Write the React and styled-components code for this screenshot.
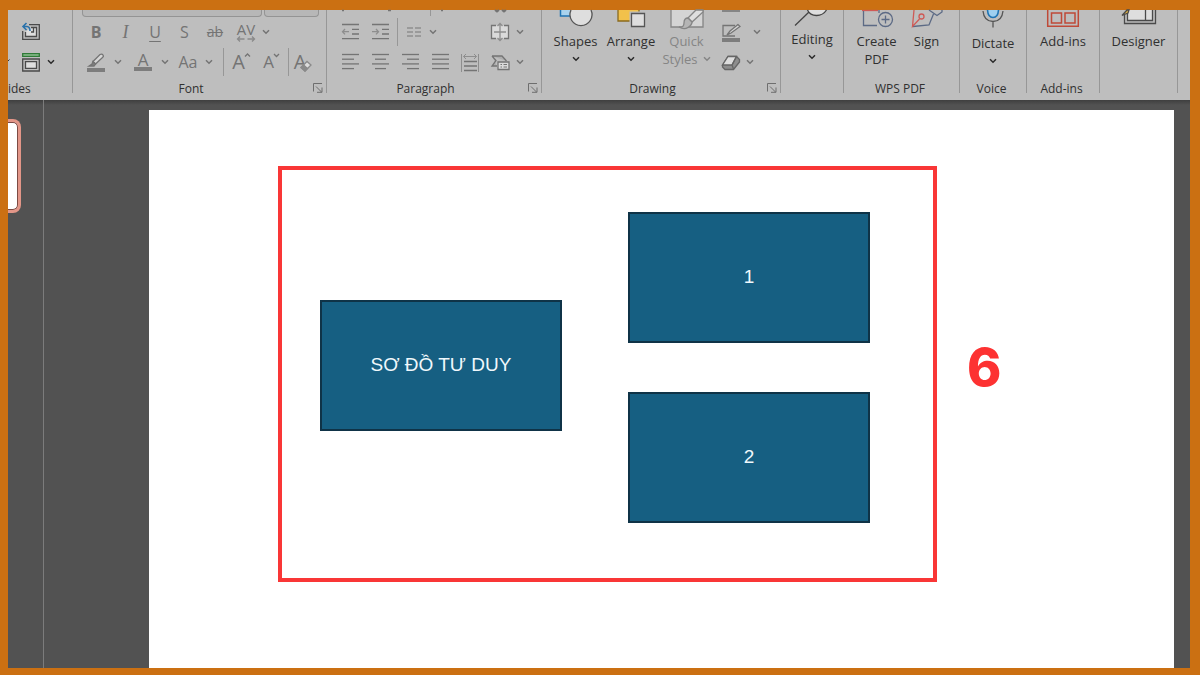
import styled, { createGlobalStyle, css } from "styled-components";

const GlobalStyle = createGlobalStyle`
  * {
    box-sizing: border-box;
  }
  body {
    margin: 0;
    background-color: #cb7012;
    font-family: "Open Sans", "Noto Sans", sans-serif;
  }
  svg {
    display: block;
    flex: none;
    overflow: visible;
  }
`;

//orange frame around the whole window
const Frame = styled.div`
  display: flex;
  flex-direction: column;
  min-height: 100vh;
  padding: 10px 10px 7px 8px;
  background-color: #cb7012;
`;

//ribbon
const Ribbon = styled.header`
  display: grid;
  grid-template-columns: 65fr 254fr 215fr 239fr 63fr 116fr 67fr 73fr 78fr 12fr;
  padding-bottom: 7px;
  background-color: #bebebe;
`;

const Group = styled.section`
  display: flex;
  flex-direction: column;
  min-width: 0;
  border-right: 1px solid #979797;
`;

const GroupBody = styled.div`
  height: 69px;
`;

const LargeRow = styled.div`
  display: flex;
  justify-content: ${(props) => (props.$start ? "flex-start" : "center")};
  height: 69px;
  padding-left: ${(props) => (props.$start ? "6px" : "0")};
`;

const GroupFooter = styled.div`
  display: flex;
  height: 14px;
  padding: 4px 3px 0 0;
`;

const GroupLabel = styled.span`
  flex: 1;
  color: #303030;
  font-size: 12px;
  line-height: 12px;
  text-align: ${(props) => (props.$left ? "left" : "center")};
  white-space: nowrap;
`;

const Row = styled.div`
  display: flex;
  align-items: center;
  height: 30px;
  padding: ${(props) => props.$pad || "0 16px 0 8px"};
`;

//bottom edge of the row that is scrolled under the frame
const TopRow = styled.div`
  display: flex;
  gap: 2px;
  height: 7px;
  padding: 0 7px 0 9px;
`;

const BoxEdge = styled.div`
  flex: ${(props) => props.$grow} 0 0;
  border: 1px solid #949494;
  border-top: 0;
  border-radius: 0 0 4px 4px;
  background-color: #b7b7b7;
`;

const plainButton = css`
  padding: 0;
  border: 0;
  background: none;
  font-family: inherit;
`;

const Tool = styled.button`
  ${plainButton}
  display: flex;
  flex: none;
  align-items: center;
  justify-content: center;
  width: ${(props) => props.$w || 30}px;
  height: 28px;
  color: #747474;
`;

const Letter = styled.span`
  font-size: ${(props) => props.$size || 16}px;
  line-height: 20px;
  font-weight: ${(props) => (props.$bold ? 700 : 400)};
  font-style: ${(props) => (props.$italic ? "italic" : "normal")};
  font-family: ${(props) => (props.$serif ? '"Liberation Serif", serif' : "inherit")};
  text-decoration: ${(props) => props.$line || "none"};
  text-decoration-thickness: 1px;
  text-underline-offset: 3px;
`;

const Stack = styled.span`
  display: flex;
  flex-direction: column;
  align-items: center;
`;

const TightLetter = styled.span`
  font-size: ${(props) => props.$size}px;
  line-height: 14px;
`;

const ColorBar = styled.span`
  width: 18px;
  height: 4px;
  background-color: #7d7d7d;
`;

const SizeLetter = styled.span`
  display: flex;
  align-items: flex-start;
  font-size: ${(props) => props.$size}px;
  line-height: 20px;
`;

const Divider = styled.span`
  flex: none;
  width: 1px;
  height: 28px;
  margin: 0 2px 0 ${(props) => props.$before || 2}px;
  background-color: #979797;
`;

const Spacer = styled.span`
  flex: 1;
`;

const LargeButton = styled.button`
  ${plainButton}
  display: flex;
  flex: none;
  flex-direction: column;
  align-items: center;
  width: ${(props) => props.$w || 50}px;
  color: ${(props) => (props.$muted ? "#858585" : "#303030")};
  font-size: 13px;
  line-height: 18px;
  white-space: nowrap;
`;

const LargeIcon = styled.span`
  display: flex;
  align-items: flex-end;
  height: ${(props) => props.$h || 18}px;
  margin-bottom: 4px;
`;

const ButtonLine = styled.span`
  display: flex;
  align-items: center;
  gap: 5px;
  height: 18px;
`;

const Launcher = styled.button`
  ${plainButton}
  display: flex;
  justify-content: flex-end;
  width: 14px;
  height: 10px;
`;

//work area below the ribbon
const Workspace = styled.main`
  display: flex;
  flex: 1;
  background: linear-gradient(#3f3f3f, #525252 5px);
`;

const Thumbnails = styled.aside`
  width: 36px;
  padding-top: 19px;
  border-right: 1px solid #7c7c7c;
`;

const Thumbnail = styled.button`
  ${plainButton}
  display: block;
  width: 13px;
  height: 94px;
  border: 3px solid #e39688;
  border-left: 0;
  border-radius: 0 8px 8px 0;
  background-color: #ffffff;
  box-shadow: inset -1px 0 0 #7c4b44, inset 0 1px 0 #7c4b44, inset 0 -1px 0 #7c4b44;
`;

const Canvas = styled.div`
  display: flex;
  flex: 1;
  padding: 10px 16px 0 105px;
`;

const Slide = styled.div`
  position: relative;
  flex: 1;
  background-color: #ffffff;
`;

//shapes are placed freely on the slide
const Node = styled.div`
  position: absolute;
  left: ${(props) => props.$x}px;
  top: ${(props) => props.$y}px;
  display: flex;
  align-items: center;
  justify-content: center;
  width: 242px;
  height: 131px;
  padding-bottom: 2px;
  border: 2px solid #0f3347;
  background-color: #165f82;
  color: #f0f8fc;
  font-family: "Liberation Sans", Arial, sans-serif;
  font-size: 19px;
  line-height: 24px;
`;

const Highlight = styled.div`
  position: absolute;
  left: 129px;
  top: 56px;
  width: 659px;
  height: 416px;
  border: 4px solid #f93636;
`;

const StepNumber = styled.span`
  position: absolute;
  left: 818px;
  top: 228px;
  color: #fd3232;
  font-family: Inter, sans-serif;
  font-size: 52px;
  font-weight: 800;
  line-height: 60px;
`;

function Chevron({ color = "#747474" }) {
  return (
    <svg width="8" height="6" viewBox="0 0 8 6" fill="none" stroke={color} strokeWidth="1.5">
      <path d="M1 1.2 4 4.2 7 1.2" />
    </svg>
  );
}

function Drop({ w = 10, label, dark }) {
  return (
    <Tool $w={w} aria-label={label}>
      <Chevron color={dark ? "#2a2a2a" : "#747474"} />
    </Tool>
  );
}

function Icon({ children, w = 20, h = 20, stroke = "#747474" }) {
  return (
    <svg width={w} height={h} viewBox={`0 0 ${w} ${h}`} fill="none" stroke={stroke} strokeWidth="1.3">
      {children}
    </svg>
  );
}

//horizontal text lines used by all the alignment icons, each one is [x1, x2]
function LinesIcon({ lines }) {
  return (
    <Icon>
      {lines.map(([from, to], i) => (
        <path key={i} d={`M${from} ${2.5 + i * 4.7}H${to}`} />
      ))}
    </Icon>
  );
}

function Footer({ children, launcher }) {
  return (
    <GroupFooter>
      <GroupLabel>{children}</GroupLabel>
      {launcher && (
        <Launcher aria-label={`${children} settings`}>
          <svg width="10" height="10" viewBox="0 0 10 10" fill="none" stroke="#6e6e6e">
            <path d="M.5 8.5V.5H9M3 3.5 8.5 9M9 4.5V9.3H4" />
          </svg>
        </Launcher>
      )}
    </GroupFooter>
  );
}

function SlidesGroup() {
  return (
    <Group>
      <GroupBody>
        <TopRow />
        <Row $pad="0 0 0 8px">
          <Tool aria-label="Reset">
            <Icon stroke="#4a4a4a">
              <path d="M8 2.7H18.300V17.300H1.700V9" />
              <path d="M10 5.500H15.500V14.500H4.500V10" fill="#dedede" />
              <path d="M12.500 5.500V10H10" />
              <path d="M5.500 1 2 4.500 5.500 8M2.300 4.500H6Q9 4.700 9 9" stroke="#2a72ab" strokeWidth="1.600" />
            </Icon>
          </Tool>
        </Row>
        <Row $pad="0">
          <Tool $w={8} aria-label="New slide">
            <svg width="8" height="6" viewBox="0 0 8 6" stroke="#333">
              <path d="M0 2 1.5 .5" />
            </svg>
          </Tool>
          <Tool aria-label="Layout">
            <Icon stroke="#4a4a4a">
              <path d="M1.700 1.700H18.300V4.300H1.700Z" stroke="#2f7a37" fill="#8fbf92" />
              <path d="M1.700 7H18.300V19H1.700Z" />
              <path d="M4.500 9.700H15.500V16.300H4.500Z" fill="#dedede" />
            </Icon>
          </Tool>
          <Drop dark label="Layout options" />
        </Row>
      </GroupBody>
      <GroupFooter>
        <GroupLabel $left>ides</GroupLabel>
      </GroupFooter>
    </Group>
  );
}

function FontGroup() {
  return (
    <Group>
      <GroupBody>
        <TopRow>
          <BoxEdge $grow={181} />
          <BoxEdge $grow={54} />
        </TopRow>
        <Row $pad="0 0 0 8px">
          <Tool><Letter $bold>B</Letter></Tool>
          <Tool $w={29}><Letter $italic $serif $size={18}>I</Letter></Tool>
          <Tool><Letter $line="underline">U</Letter></Tool>
          <Tool $w={29}><Letter>S</Letter></Tool>
          <Tool $w={32}><Letter $line="line-through" $size={14}>ab</Letter></Tool>
          <Tool>
            <Stack>
              <TightLetter $size={15}>AV</TightLetter>
              <Icon w={20} h={6} stroke="#8a8a8a">
                <path d="M4 .5 1.5 3 4 5.5M1.5 3H8.5M16 .5 18.5 3 16 5.5M18.5 3H11.5" />
              </Icon>
            </Stack>
          </Tool>
          <Drop label="Character spacing" />
        </Row>
        <Row $pad="0 0 0 8px">
          <Tool aria-label="Highlight">
            <Icon>
              <path d="M1 16H19V20H1Z" fill="#7d7d7d" stroke="none" />
              <path d="M7 9.500 14 2.500Q16 1.500 17 3T16.500 5.500L9.500 12Z" fill="#d6d6d6" />
              <path d="M7 9.500 6 12 3 14H8L9.500 12Z" fill="#7d7d7d" />
            </Icon>
          </Tool>
          <Drop w={14} label="Highlight colour" />
          <Tool $w={36}>
            <Stack>
              <TightLetter $size={17}>A</TightLetter>
              <ColorBar />
            </Stack>
          </Tool>
          <Drop w={8} label="Font colour" />
          <Tool $w={38}><Letter>Aa</Letter></Tool>
          <Drop w={4} label="Change case" />
          <Divider $before={12} />
          <Tool>
            <SizeLetter $size={20}>
              A
              <Icon w={5} h={8}><path d="M0 4.500 2.500 2 5 4.500" /></Icon>
            </SizeLetter>
          </Tool>
          <Tool>
            <SizeLetter $size={17}>
              A
              <Icon w={5} h={8}><path d="M0 2 2.500 4.500 5 2" /></Icon>
            </SizeLetter>
          </Tool>
          <Divider />
          <Tool $w={24}>
            <SizeLetter $size={20}>
              A
              <Icon w={6} h={20} stroke="#8a8a8a">
                <path d="M-5 15.500 1 9.500 5 13 -1 19Z" fill="#dcdcdc" />
                <path d="M-5 15.500 -2.500 13 1.500 16.500 -1 19Z" fill="#8a8a8a" />
              </Icon>
            </SizeLetter>
          </Tool>
        </Row>
      </GroupBody>
      <Footer launcher>Font</Footer>
    </Group>
  );
}

function ParagraphGroup() {
  return (
    <Group>
      <GroupBody>
        <TopRow>
          <Icon w={170} h={7}>
            <path d="M6 .5H8M52 .5H55M105 .5H107" />
            <path d="M94.500 0V6" stroke="#979797" strokeWidth="1" />
            <path d="M159 0 161 1.500 163 0M166 0 168 1.500 170 0" strokeWidth="2" />
          </Icon>
        </TopRow>
        <Row>
          <Tool aria-label="Decrease indent">
            <Icon>
              <path d="M2 2.500H19M12 7.300H19M12 12H19M2 16.700H19" />
              <path d="M5 7 2.500 9.700 5 12.400M2.500 9.700H9" stroke="#8e8e8e" />
            </Icon>
          </Tool>
          <Tool aria-label="Increase indent">
            <Icon>
              <path d="M2 2.500H19M12 7.300H19M12 12H19M2 16.700H19" />
              <path d="M6 7 8.500 9.700 6 12.400M8.500 9.700H2" stroke="#8e8e8e" />
            </Icon>
          </Tool>
          <Divider />
          <Tool aria-label="Columns">
            <Icon stroke="#8e8e8e">
              <path d="M2 6H8M10 6H16M2 10H8M10 10H16M2 14H8M10 14H16" />
            </Icon>
          </Tool>
          <Drop w={6} label="Column options" />
          <Spacer />
          <Tool aria-label="Align text">
            <Icon>
              <path d="M1.500 3.500H18.500V16.500H1.500Z" fill="#dadada" stroke="none" />
              <path d="M6 3.500H1.500V16.500H6M14 3.500H18.500V16.500H14" />
              <path d="M4 10H16M10 2V18M7.500 4 10 1.500 12.500 4M7.500 16 10 18.500 12.500 16" stroke="#8e8e8e" />
            </Icon>
          </Tool>
          <Drop label="Align text options" />
        </Row>
        <Row>
          <Tool aria-label="Align left"><LinesIcon lines={[[2, 19], [2, 14], [2, 19], [2, 14]]} /></Tool>
          <Tool aria-label="Center"><LinesIcon lines={[[2, 19], [5, 16], [2, 19], [5, 16]]} /></Tool>
          <Tool aria-label="Align right"><LinesIcon lines={[[2, 19], [7, 19], [2, 19], [7, 19]]} /></Tool>
          <Tool aria-label="Justify"><LinesIcon lines={[[2, 19], [2, 19], [2, 19], [2, 19]]} /></Tool>
          <Tool aria-label="Distribute">
            <Icon>
              <path d="M4 9.500H17M4 14H17M4 18.500H17" />
              <path d="M1.500 2V20M18.500 2V20M6 2 3.500 4.500 6 7M14 2 16.500 4.500 14 7M3.500 4.500H16.500" stroke="#8e8e8e" strokeWidth="1" />
            </Icon>
          </Tool>
          <Spacer />
          <Tool aria-label="Convert to SmartArt">
            <Icon>
              <path d="M2 4H12L16.500 9M2 4 6 8.500 2 14H7" fill="#adadad" />
              <path d="M8 10H19V17.500H8Z" fill="#dadada" />
              <path d="M10.500 12.500H12M13.500 12.500H17M10.500 15H12M13.500 15H17" strokeWidth="1" />
            </Icon>
          </Tool>
          <Drop label="SmartArt options" />
        </Row>
      </GroupBody>
      <Footer launcher>Paragraph</Footer>
    </Group>
  );
}

function DrawingGroup() {
  return (
    <Group>
      <LargeRow $start>
        <LargeButton $w={55}>
          <LargeIcon>
            <Icon w={34} h={18} stroke="#555">
              <path d="M1.500 0V6H12V0" fill="#a9d3ee" stroke="none" />
              <path d="M1.500 0V6H12" stroke="#1f74b4" strokeWidth="1.500" />
              <path d="M12 0A11 11 0 1 0 32 0Z" fill="#dedede" stroke="none" />
              <path d="M12 0A11 11 0 1 0 32 0" />
            </Icon>
          </LargeIcon>
          <ButtonLine>Shapes</ButtonLine>
          <ButtonLine><Chevron color="#2a2a2a" /></ButtonLine>
        </LargeButton>
        <LargeButton $w={56}>
          <LargeIcon>
            <Icon w={28} h={18} stroke="#555">
              <path d="M1 0V11H22V0" fill="#f2c14b" stroke="#8a6a1c" />
              <path d="M14 3H28V17H14Z" fill="#dedede" stroke="#bebebe" strokeWidth="3" />
              <path d="M14.500 3.500H27.500V16.500H14.500Z" fill="#dedede" />
            </Icon>
          </LargeIcon>
          <ButtonLine>Arrange</ButtonLine>
          <ButtonLine><Chevron color="#2a2a2a" /></ButtonLine>
        </LargeButton>
        <LargeButton $w={55} $muted>
          <LargeIcon>
            <Icon w={34} h={18} stroke="#858585">
              <path d="M1 0V17H33V0" fill="#d4d4d4" />
              <path d="M18 8 26 0H33V2L22 12Z" fill="#dedede" />
              <path d="M18 8Q14 8 14 13T9 17Q14 20 18 17.500T22 12Z" fill="#b5b5b5" />
            </Icon>
          </LargeIcon>
          <ButtonLine>Quick</ButtonLine>
          <ButtonLine>Styles <Chevron color="#858585" /></ButtonLine>
        </LargeButton>
        <GroupBody>
          <TopRow>
            <Icon w={18} h={2}><path d="M-1 1H17" stroke="#858585" strokeWidth="2" /></Icon>
          </TopRow>
          <Row $pad="0 0 0 2px">
            <Tool aria-label="Shape outline">
              <Icon>
                <path d="M1 16H19V20H1Z" fill="#7d7d7d" stroke="none" />
                <path d="M14 3.500H2V14H14" />
                <path d="M17 2.500 9 9 6 13 10 11 19 4.500Z" fill="#d6d6d6" />
              </Icon>
            </Tool>
            <Drop w={22} label="Outline options" />
          </Row>
          <Row $pad="0 0 0 2px">
            <Tool aria-label="Shape effects">
              <Icon stroke="#666">
                <path d="M1.500 13 7 4.500H15.500L18.500 7.500V10L12.500 17.500H4L1.500 15Z" fill="#8e8e8e" />
                <path d="M1.500 13 7 4.500H15.500L11 13Z" fill="#dedede" />
                <path d="M11 13 12.500 17M11 13 15.500 4.500" />
              </Icon>
            </Tool>
            <Drop w={8} label="Effect options" />
          </Row>
        </GroupBody>
      </LargeRow>
      <Footer launcher>Drawing</Footer>
    </Group>
  );
}

function EditingGroup() {
  return (
    <Group>
      <LargeRow>
        <LargeButton>
          <LargeIcon $h={16}>
            <Icon w={34} h={16} stroke="#444">
              <path d="M12.500 0Q15 5.500 21.500 5.500T31.500 0Z" fill="#dedede" stroke="none" />
              <path d="M12.500 0Q15 5.500 21.500 5.500T31.500 0" />
              <path d="M14 2 0 15.500" />
            </Icon>
          </LargeIcon>
          <ButtonLine>Editing</ButtonLine>
          <ButtonLine><Chevron color="#2a2a2a" /></ButtonLine>
        </LargeButton>
      </LargeRow>
    </Group>
  );
}

function PdfGroup() {
  return (
    <Group>
      <LargeRow>
        <LargeButton>
          <LargeIcon>
            <Icon w={30} h={18} stroke="#5c6a85">
              <path d="M0 .5H16" stroke="#cf5a56" />
              <path d="M1.500 1V15.500H15M17 0V3" />
              <circle cx="23.500" cy="9.500" r="7" />
              <path d="M23.500 5.500V13.500M19.500 9.500H27.500" />
            </Icon>
          </LargeIcon>
          <ButtonLine>Create</ButtonLine>
          <ButtonLine>PDF</ButtonLine>
        </LargeButton>
        <LargeButton>
          <LargeIcon>
            <Icon w={32} h={18} stroke="#5c6a85">
              <path d="M2 16.500 18 15 22.500 4M18 0 26 5.500 31 2V0" />
              <path d="M3 0 1.500 16.500 8.500 9" stroke="#cf5a56" />
              <circle cx="10.500" cy="6.500" r="2.500" stroke="#cf5a56" />
            </Icon>
          </LargeIcon>
          <ButtonLine>Sign</ButtonLine>
        </LargeButton>
      </LargeRow>
      <Footer>WPS PDF</Footer>
    </Group>
  );
}

function VoiceGroup() {
  return (
    <Group>
      <LargeRow>
        <LargeButton>
          <LargeIcon $h={20}>
            <Icon w={20} h={20} stroke="#555">
              <path d="M4.500 0Q5 7.500 10 7.500T15.500 0Z" fill="#9fd0f0" stroke="none" />
              <path d="M4.500 0Q5 7.500 10 7.500T15.500 0" stroke="#1f74b4" strokeWidth="1.600" />
              <path d="M0 1Q1 11.500 10 11.500T20 1M10 11.500V17.500" />
            </Icon>
          </LargeIcon>
          <ButtonLine>Dictate</ButtonLine>
          <ButtonLine><Chevron color="#2a2a2a" /></ButtonLine>
        </LargeButton>
      </LargeRow>
      <Footer>Voice</Footer>
    </Group>
  );
}

function AddinsGroup() {
  return (
    <Group>
      <LargeRow>
        <LargeButton>
          <LargeIcon>
            <Icon w={32} h={18} stroke="#bf4a38">
              <path d="M.7 0V16.300H31.300V0" strokeWidth="1.500" />
              <path d="M4.500 3H14.500V13H4.500ZM18 3H28V13H18Z" strokeWidth="1.500" />
            </Icon>
          </LargeIcon>
          <ButtonLine>Add-ins</ButtonLine>
        </LargeButton>
      </LargeRow>
      <Footer>Add-ins</Footer>
    </Group>
  );
}

function DesignerGroup() {
  return (
    <Group>
      <LargeRow>
        <LargeButton>
          <LargeIcon>
            <Icon w={36} h={18} stroke="#4a4a4a">
              <path d="M3.500 5V13.500H34.500V0" />
              <path d="M6.500 0V10.500H31.500V0" fill="#dedede" />
              <path d="M24.500 0V10.500" />
              <path d="M6 0 1 5.500 7 3 8 0Z" fill="#e5b33c" />
            </Icon>
          </LargeIcon>
          <ButtonLine>Designer</ButtonLine>
        </LargeButton>
      </LargeRow>
    </Group>
  );
}

export default function App() {
  return (
    <Frame>
      <GlobalStyle />
      <Ribbon>
        <SlidesGroup />
        <FontGroup />
        <ParagraphGroup />
        <DrawingGroup />
        <EditingGroup />
        <PdfGroup />
        <VoiceGroup />
        <AddinsGroup />
        <DesignerGroup />
      </Ribbon>
      <Workspace>
        <Thumbnails>
          <Thumbnail aria-label="Slide 1" />
        </Thumbnails>
        <Canvas>
          <Slide>
            <Node $x={171} $y={190}>SƠ ĐỒ TƯ DUY</Node>
            <Node $x={479} $y={102}>1</Node>
            <Node $x={479} $y={282}>2</Node>
            <Highlight />
            <StepNumber>6</StepNumber>
          </Slide>
        </Canvas>
      </Workspace>
    </Frame>
  );
}
